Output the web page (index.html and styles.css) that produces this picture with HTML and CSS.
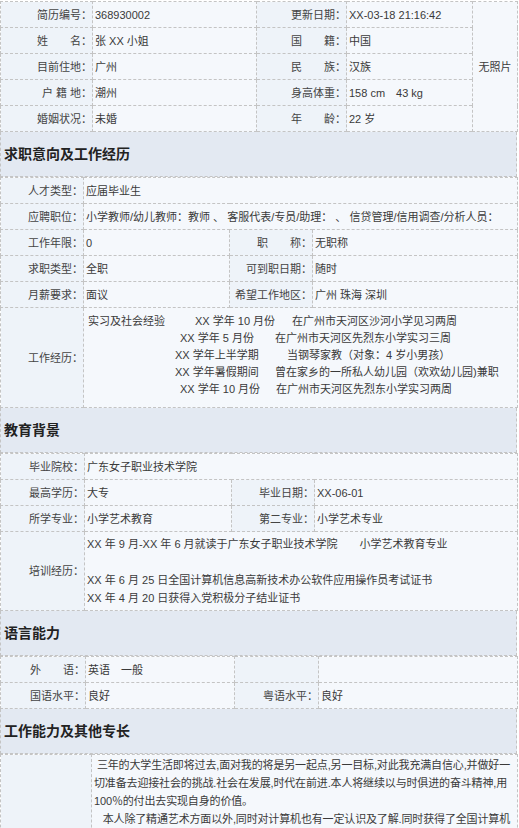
FILE: index.html
```
<!DOCTYPE html>
<html lang="zh-CN">
<head>
<meta charset="utf-8">
<title>个人简历</title>
<link rel="stylesheet" href="styles.css">
</head>
<body>
<div class="resume">
  <table class="t">
    <colgroup><col class="c92"><col class="c164"><col class="c90"><col class="c126"><col class="c45"></colgroup>
    <tr><td class="lb">简历编号：</td><td>368930002</td><td class="lb">更新日期：</td><td>XX-03-18 21:16:42</td><td class="photo" rowspan="5">无照片</td></tr>
    <tr><td class="lb">姓　　名：</td><td>张 XX 小姐</td><td class="lb">国　　籍：</td><td>中国</td></tr>
    <tr><td class="lb">目前住地：</td><td>广州</td><td class="lb">民　　族：</td><td>汉族</td></tr>
    <tr><td class="lb">户&nbsp;籍&nbsp;地：</td><td>潮州</td><td class="lb">身高体重：</td><td>158 cm　43 kg</td></tr>
    <tr><td class="lb">婚姻状况：</td><td>未婚</td><td class="lb">年　　龄：</td><td>22 岁</td></tr>
  </table>

  <div class="hd">求职意向及工作经历</div>
  <table class="t">
    <colgroup><col class="c83"><col class="c146"><col class="c83"><col class="c205"></colgroup>
    <tr><td class="lb">人才类型：</td><td colspan="3">应届毕业生</td></tr>
    <tr><td class="lb">应聘职位：</td><td colspan="3">小学教师/幼儿教师：教师 、 客服代表/专员/助理： 、 信贷管理/信用调查/分析人员：</td></tr>
    <tr><td class="lb">工作年限：</td><td>0</td><td class="lb">职　　称：</td><td>无职称</td></tr>
    <tr><td class="lb">求职类型：</td><td>全职</td><td class="lb">可到职日期：</td><td>随时</td></tr>
    <tr><td class="lb">月薪要求：</td><td>面议</td><td class="lb">希望工作地区：</td><td>广州 珠海 深圳</td></tr>
    <tr class="exp-row"><td class="lb">工作经历：</td><td colspan="3" class="exp">
      <div class="ln ln1"><span class="a1">实习及社会经验</span><span class="b1">XX 学年 10 月份</span><span>在广州市天河区沙河小学见习两周</span></div>
      <div class="ln ln2"><span class="b2">XX 学年 5 月份</span><span>在广州市天河区先烈东小学实习三周</span></div>
      <div class="ln ln3"><span class="b3">XX 学年上半学期</span><span>当钢琴家教（对象：4 岁小男孩）</span></div>
      <div class="ln ln4"><span class="b4">XX 学年暑假期间</span><span>曾在家乡的一所私人幼儿园（欢欢幼儿园)兼职</span></div>
      <div class="ln ln5"><span class="b5">XX 学年 10 月份</span><span>在广州市天河区先烈东小学实习两周</span></div>
    </td></tr>
  </table>

  <div class="hd">教育背景</div>
  <table class="t">
    <colgroup><col class="c84"><col class="c147"><col class="c83"><col class="c203"></colgroup>
    <tr><td class="lb">毕业院校：</td><td colspan="3">广东女子职业技术学院</td></tr>
    <tr><td class="lb">最高学历：</td><td>大专</td><td class="lb">毕业日期：</td><td>XX-06-01</td></tr>
    <tr><td class="lb">所学专业：</td><td>小学艺术教育</td><td class="lb">第二专业：</td><td>小学艺术专业</td></tr>
    <tr class="train-row"><td class="lb">培训经历：</td><td colspan="3" class="train">XX 年 9 月-XX 年 6 月就读于广东女子职业技术学院　　小学艺术教育专业<br><br>XX 年 6 月 25 日全国计算机信息高新技术办公软件应用操作员考试证书<br>XX 年 4 月 20 日获得入党积极分子结业证书</td></tr>
  </table>

  <div class="hd">语言能力</div>
  <table class="t">
    <colgroup><col class="c85"><col class="c149"><col class="c84"><col class="c199"></colgroup>
    <tr><td class="lb">外　　语：</td><td>英语　一般</td><td class="lb"></td><td></td></tr>
    <tr><td class="lb">国语水平：</td><td>良好</td><td class="lb">粤语水平：</td><td>良好</td></tr>
  </table>

  <div class="hd">工作能力及其他专长</div>
  <table class="t">
    <colgroup><col class="c91"><col class="c426"></colgroup>
    <tr><td class="lb"></td><td class="para">
      <div class="pl">&nbsp;三年的大学生活即将过去,面对我的将是另一起点,另一目标,对此我充满自信心,并做好一</div>
      <div class="pl">切准备去迎接社会的挑战.社会在发展,时代在前进.本人将继续以与时俱进的奋斗精神,用</div>
      <div class="pl">100％的付出去实现自身的价值。</div>
      <div class="pl">&nbsp;&nbsp;&nbsp;本人除了精通艺术方面以外,同时对计算机也有一定认识及了解.同时获得了全国计算机</div>
      <div class="pw">信息高新技术办公软件应用操作员考试证书,能熟练操作Word、Excel等办公软件.在校期间积极参加各类活动,担任班级文艺委员,组织过多次文艺晚会,具有一定的组织能力和团队合作精神.</div>
    </td></tr>
  </table>
</div>
</body>
</html>
```
FILE: styles.css
```
body {
  margin: 0;
  padding-top: 1px;
  background: #ffffff;
  font-family: "Liberation Sans", "Noto Sans CJK SC", sans-serif;
  font-size: 11px;
  line-height: 16px;
  color: #3a3a3a;
}

.resume {
  width: 517px;
}

.t {
  width: 517px;
  border-collapse: collapse;
  table-layout: fixed;
}

.t td {
  border: 1px dashed #c4c4c4;
  height: 25px;
  padding: 0 2px;
  background: #f5f8fc;
  white-space: nowrap;
  vertical-align: middle;
  overflow: visible;
}

.t td.lb {
  background: #eef3f9;
  text-align: right;
  padding: 0;
  color: #444444;
}

.t td.photo {
  text-align: center;
  padding: 0;
}

.c92 { width: 92px; }
.c164 { width: 164px; }
.c90 { width: 90px; }
.c126 { width: 126px; }
.c45 { width: 45px; }
.c83 { width: 83px; }
.c146 { width: 146px; }
.c205 { width: 205px; }
.c84 { width: 84px; }
.c147 { width: 147px; }
.c203 { width: 203px; }
.c85 { width: 85px; }
.c149 { width: 149px; }
.c199 { width: 199px; }
.c91 { width: 91px; }
.c426 { width: 426px; }

.hd {
  height: 44px;
  line-height: 44px;
  background: #e3e9f2;
  border: 1px dashed #c4c4c4;
  border-top: none;
  padding-left: 3px;
  font-size: 14px;
  font-weight: bold;
  color: #222222;
}

.exp-row td {
  height: 95px;
}

.t td.exp {
  line-height: 17px;
  padding-bottom: 4px;
}

.ln {
  display: flex;
}

.ln span {
  display: block;
}

.ln1 { padding-left: 2px; }
.ln2 { padding-left: 94px; }
.ln3 { padding-left: 89px; }
.ln4 { padding-left: 89px; }
.ln5 { padding-left: 94px; }

.a1 { width: 107px; }
.b1 { width: 97px; }
.b2 { width: 95px; }
.b3 { width: 112px; }
.b4 { width: 100px; }
.b5 { width: 96px; }

.train-row td {
  height: 78px;
}

.t td.train {
  line-height: 18px;
}

.t td.para {
  vertical-align: top;
  line-height: 18px;
  padding-top: 1px;
  white-space: normal;
  letter-spacing: -0.15px;
}

.pl {
  white-space: nowrap;
}

.pw {
  white-space: normal;
}
```
